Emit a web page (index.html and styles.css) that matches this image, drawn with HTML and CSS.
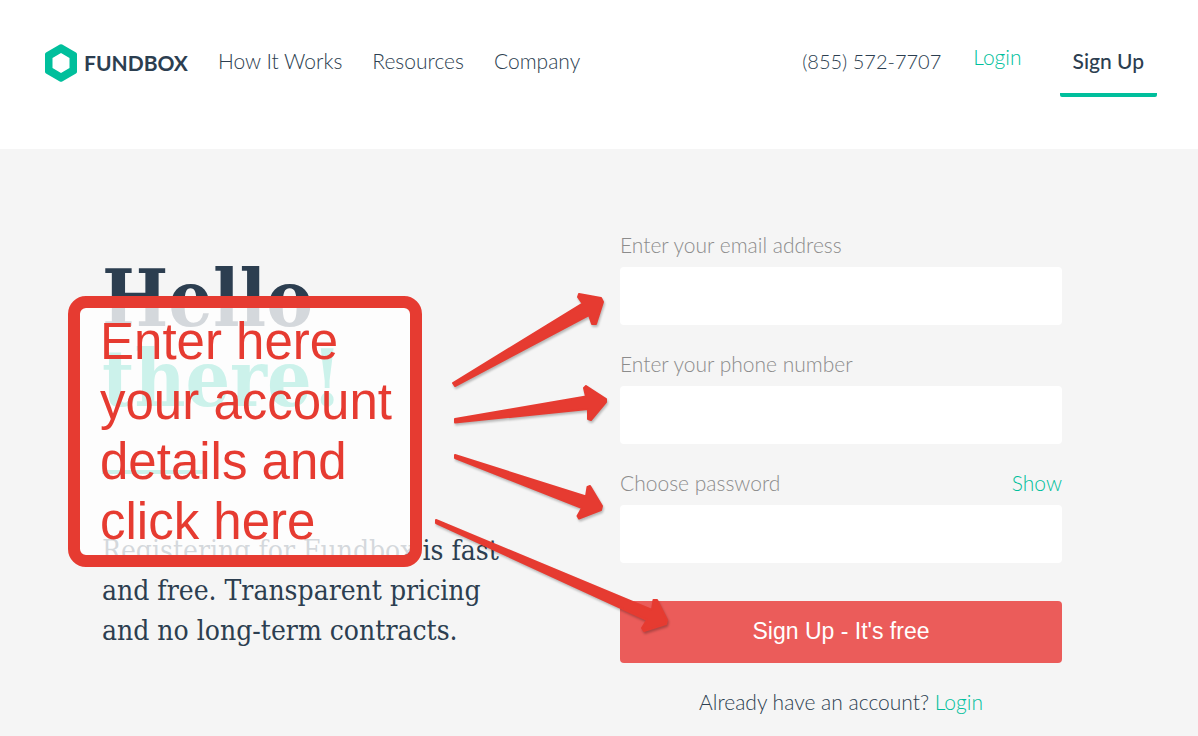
FILE: index.html
```html
<!DOCTYPE html>
<html lang="en">
<head>
    <meta charset="UTF-8">
    <meta name="viewport" content="width=device-width, initial-scale=1.0">
    <title>Fundbox - Sign Up</title>
    <link rel="stylesheet" href="styles.css">
</head>
<body>

<header class="header">
    <a class="logo" href="#">
        <svg width="32" height="38" viewBox="0 0 32 38">
            <path fill="#00bf9c" fill-rule="evenodd" d="M14.800 .5Q16 -.2 17.200 .5L31 8.500Q32 9 32 10.200V27.800Q32 29 31 29.500L17.200 37.500Q16 38.200 14.800 37.500L1 29.500Q0 29 0 27.800V10.200Q0 9 1 8.500ZM16 9L7.500 14V24L16 29L24.500 24V14Z"/>
        </svg>
        <span>FUNDBOX</span>
    </a>
    <nav class="nav">
        <a href="#">How It Works</a>
        <a href="#">Resources</a>
        <a href="#">Company</a>
    </nav>
    <div class="account">
        <a class="phone" href="tel:8555727707">(855) 572-7707</a>
        <a class="login" href="#">Login</a>
        <a class="signup-tab" href="#">Sign Up</a>
    </div>
</header>

<main class="hero">
    <section class="intro">
        <h1>Hello <span>there!</span></h1>
        <hr>
        <p>Registering for Fundbox is fast and free. Transparent pricing and no long-term contracts.</p>
    </section>

    <form class="signup-form">
        <div class="field">
            <label for="email">Enter your email address</label>
            <input type="email" id="email">
        </div>
        <div class="field">
            <label for="phone">Enter your phone number</label>
            <input type="tel" id="phone">
        </div>
        <div class="field">
            <div class="field-head">
                <label for="password">Choose password</label>
                <a href="#">Show</a>
            </div>
            <input type="password" id="password">
        </div>
        <button type="submit">Sign Up - It's free</button>
        <p class="have-account">Already have an account? <a href="#">Login</a></p>
    </form>

    <!-- Callout with arrows to the fields and the button -->
    <div class="callout">Enter here your account details and click here</div>
    <svg class="arrows" width="700" height="520" viewBox="0 149 700 520">
        <path d="M453 383L582.500 303.500L578 297L579 294L601 298L603 302L596 324L592 324L589 315L455 386Z"/>
        <path d="M455 419L586 396.500L584 388L586 386L606 399L606 402L591 420L588 419L588 409L455 422.500Z"/>
        <path d="M455 455L586 496.500L587.500 487L590 486L602 506L601 510L579 518.500L577.500 516L582 508L455 458Z"/>
        <path d="M436 520L652 610L653.500 600L657 600L667 620L666 624L644 631L642 628L647 620L436 523Z"/>
    </svg>
</main>

</body>
</html>
```
FILE: styles.css
```css
* {
    box-sizing: border-box;
}
body {
    font-family: Lato, sans-serif;
    font-size: 21px;
    font-weight: 300;
    line-height: 28px;
    color: #2c3e50;
    margin: 0;
    background: #f5f5f5;
}
a {
    color: #00bf9c;
    text-decoration: none;
}
.header {
    display: flex;
    align-items: flex-start;
    height: 149px;
    padding: 44px 41px 0 45px;
    background: #fff;
}
.logo {
    display: flex;
    align-items: center;
    gap: 7px;
    color: #2c3e50;
    font-weight: bold;
}
.nav {
    display: flex;
    gap: 30px;
    margin: 3px 0 0 30px;
}
.nav a,
.phone {
    color: #2c3e50;
}
.phone {
    font-size: 20px;
}
.account {
    display: flex;
    align-items: flex-start;
    margin-left: auto;
    padding-top: 3px;
}
.login {
    margin: -4px 38px 0 32px;
}
.signup-tab {
    padding: 0 13px 18px;
    border-bottom: 4px solid #00bf9c;
    border-radius: 2px;
    color: #2c3e50;
    font-weight: 500;
}
.hero {
    position: relative;
    display: flex;
    justify-content: space-between;
    padding: 82px 136px 18px 102px;
}
.intro {
    width: 420px;
    padding-top: 28px;
}
h1 {
    margin: 0;
    font-family: "DejaVu Serif Condensed", "DejaVu Serif", serif;
    font-size: 78px;
    font-weight: bold;
    line-height: 80px;
}
h1 span {
    display: block;
    color: #00bf9c;
}
hr {
    width: 101px;
    height: 4px;
    margin: 51px 0 57px;
    border: 0;
    background: #00bf9c;
}
.intro p {
    margin: 0;
    font-family: "DejaVu Serif Condensed", "DejaVu Serif", serif;
    font-size: 28px;
    font-weight: 400;
    line-height: 40px;
}
.signup-form {
    width: 442px;
}
.field {
    margin-bottom: 25px;
}
.field label {
    display: block;
    margin-bottom: 8px;
    color: #8c8c8c;
}
.field-head {
    display: flex;
    justify-content: space-between;
}
.field input {
    display: block;
    width: 100%;
    height: 58px;
    padding: 0 16px;
    border: 0;
    border-radius: 4px;
    background: #fff;
    font: inherit;
}
.signup-form button {
    width: 100%;
    height: 62px;
    margin-top: 13px;
    padding: 0 0 2px;
    border: 0;
    border-radius: 4px;
    background: #eb5c5a;
    color: #fff;
    font-family: "Liberation Sans", Arial, sans-serif;
    font-size: 23px;
    cursor: pointer;
}
.have-account {
    margin: 25px 0 0;
    text-align: center;
}
.callout {
    position: absolute;
    top: 147px;
    left: 68px;
    width: 354px;
    padding: 4px 8px 3px 20px;
    border: 12px solid #e63b31;
    border-radius: 18px;
    background: rgba(255, 255, 255, 0.8);
    background-clip: padding-box;
    color: #e63b31;
    font-family: "Liberation Sans", Arial, sans-serif;
    font-size: 51px;
    font-weight: 400;
    line-height: 60px;
}
.arrows {
    position: absolute;
    top: 0;
    left: 0;
    pointer-events: none;
}
.arrows path {
    fill: #e63b31;
    stroke: #e63b31;
    stroke-width: 2;
    stroke-linejoin: round;
    filter: drop-shadow(1px 2px 1px rgba(0, 0, 0, 0.25));
}
```
